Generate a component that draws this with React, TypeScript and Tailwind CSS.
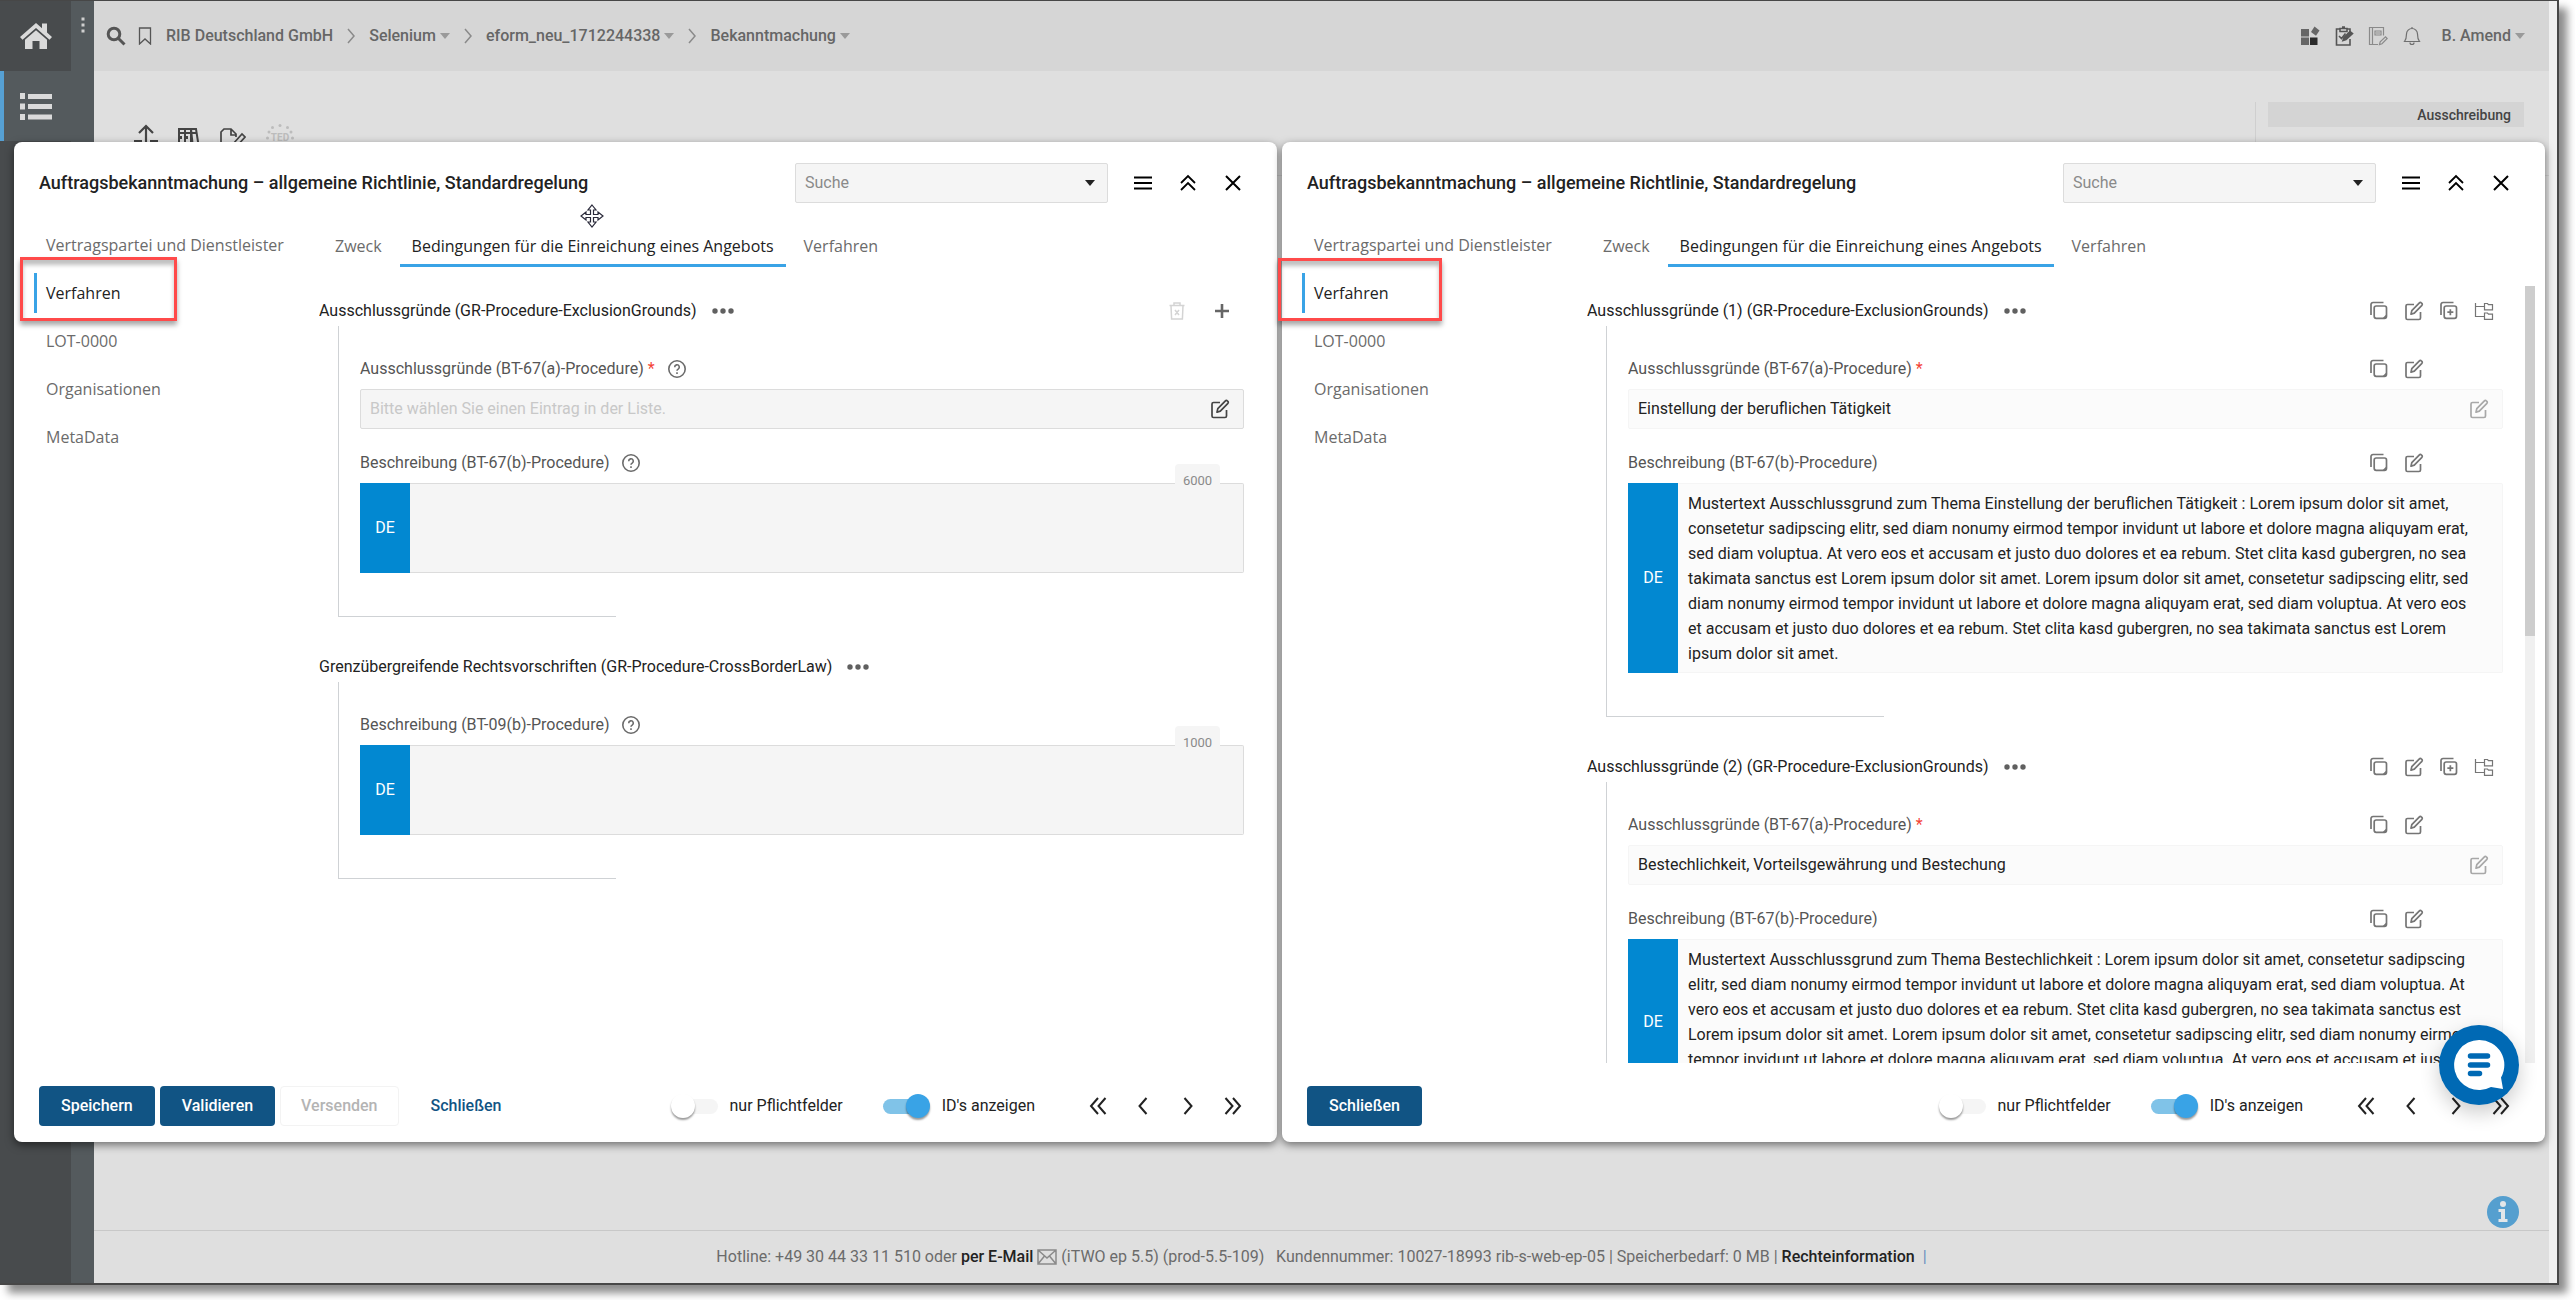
import { useId } from 'react';
import type { ReactNode } from 'react';
import clsx from 'clsx';

type IconProps = { className?: string };

const NAV_ITEMS = ['Vertragspartei und Dienstleister', 'Verfahren', 'LOT-0000', 'Organisationen', 'MetaData'];
const TABS = ['Zweck', 'Bedingungen für die Einreichung eines Angebots', 'Verfahren'];

const LOREM_1 =
  'Mustertext Ausschlussgrund zum Thema Einstellung der beruflichen Tätigkeit : Lorem ipsum dolor sit amet, consetetur sadipscing elitr, sed diam nonumy eirmod tempor invidunt ut labore et dolore magna aliquyam erat, sed diam voluptua. At vero eos et accusam et justo duo dolores et ea rebum. Stet clita kasd gubergren, no sea takimata sanctus est Lorem ipsum dolor sit amet. Lorem ipsum dolor sit amet, consetetur sadipscing elitr, sed diam nonumy eirmod tempor invidunt ut labore et dolore magna aliquyam erat, sed diam voluptua. At vero eos et accusam et justo duo dolores et ea rebum. Stet clita kasd gubergren, no sea takimata sanctus est Lorem ipsum dolor sit amet.';
const LOREM_2 =
  'Mustertext Ausschlussgrund zum Thema Bestechlichkeit : Lorem ipsum dolor sit amet, consetetur sadipscing elitr, sed diam nonumy eirmod tempor invidunt ut labore et dolore magna aliquyam erat, sed diam voluptua. At vero eos et accusam et justo duo dolores et ea rebum. Stet clita kasd gubergren, no sea takimata sanctus est Lorem ipsum dolor sit amet. Lorem ipsum dolor sit amet, consetetur sadipscing elitr, sed diam nonumy eirmod tempor invidunt ut labore et dolore magna aliquyam erat, sed diam voluptua. At vero eos et accusam et justo duo dolores et ea rebum.';

/* ---------- icons ---------- */

function EditIcon({ className }: IconProps) {
  return (
    <svg viewBox="0 0 20 20" className={clsx('size-5', className)} fill="none" stroke="currentColor" strokeWidth="1.7">
      <path d="M10 3.5H3.5a1.5 1.5 0 0 0-1.5 1.5v12a1.5 1.5 0 0 0 1.5 1.5h11.5a1.5 1.5 0 0 0 1.5-1.5v-6" />
      <path d="M7 13.2l.8-3.6 7.6-7.8a1.3 1.3 0 0 1 1.9 0l.6.6a1.3 1.3 0 0 1 0 1.9l-7.6 7.8z" strokeLinejoin="round" />
    </svg>
  );
}

function CopyIcon({ className }: IconProps) {
  return (
    <svg viewBox="0 0 20 20" className={clsx('size-5', className)} fill="none" stroke="currentColor" strokeWidth="1.7">
      <path d="M2 14V3.500a2 2 0 0 1 2-2h10.500" />
      <rect x="5.200" y="5" width="12.300" height="12.300" rx="2" />
      <path d="M13.500 17.300l4-4v2.500a1.500 1.500 0 0 1-1.500 1.500z" fill="currentColor" stroke="none" />
    </svg>
  );
}

function CopyPlusIcon({ className }: IconProps) {
  return (
    <svg viewBox="0 0 20 20" className={clsx('size-5', className)} fill="none" stroke="currentColor" strokeWidth="1.7">
      <path d="M2 14V3.500a2 2 0 0 1 2-2h10.500" />
      <rect x="5.200" y="5" width="12.300" height="12.300" rx="2" />
      <path d="M11.350 8.200v6M8.350 11.200h6" />
    </svg>
  );
}

function TreeIcon({ className }: IconProps) {
  return (
    <svg viewBox="0 0 20 20" className={clsx('size-5', className)} fill="none" stroke="currentColor" strokeWidth="1.200">
      <path d="M1.500 2v13.500h8.500M1.500 5.500H10" />
      <path d="M10.500 2.500h3l1 1.200h4v5.100h-8zM10.500 12h3l1 1.200h4v5.100h-8z" />
    </svg>
  );
}

function TrashIcon({ className }: IconProps) {
  return (
    <svg viewBox="0 0 20 20" className={clsx('size-5', className)} fill="none" stroke="currentColor" strokeWidth="1.500">
      <path d="M2.500 4.500h15M7 4V2h6v2M4 4.500l.6 13.500h10.800L16 4.500M8 9l4 5M12 9l-4 5" />
    </svg>
  );
}

function HelpIcon() {
  return (
    <svg viewBox="0 0 20 20" className="size-5 text-[#6b6b6b]" fill="none" stroke="currentColor" strokeWidth="1.600">
      <circle cx="10" cy="10" r="8.200" />
      <path d="M7.700 8.200a2.300 2.300 0 1 1 3.500 1.900c-.8.5-1.200.8-1.200 1.700M10 13.300v1.700" />
    </svg>
  );
}

function DotsIcon() {
  return (
    <svg viewBox="0 0 22 6" className="h-1.5 w-[22px] text-[#606060]" fill="currentColor">
      <circle cx="3" cy="3" r="2.700" />
      <circle cx="11" cy="3" r="2.700" />
      <circle cx="19" cy="3" r="2.700" />
    </svg>
  );
}

function Caret({ className }: IconProps) {
  return (
    <svg viewBox="0 0 10 6" className={className} fill="currentColor">
      <path d="M0 0h10L5 6z" />
    </svg>
  );
}

function LineIcon({ d, className, width = '2' }: { d: string; className?: string; width?: string }) {
  return (
    <svg viewBox="0 0 20 20" className={clsx('size-5', className)} fill="none" stroke="currentColor" strokeWidth={width}>
      <path d={d} />
    </svg>
  );
}

/* ---------- background page ---------- */

function SideRail() {
  return (
    <aside className="flex w-[94px] shrink-0 bg-[#545a5d]">
      <div className="flex w-[71px] flex-col bg-[#484b4d]">
        <button aria-label="Start" className="flex h-[70px] items-center justify-center text-[#dadada]">
          <svg viewBox="0 0 32 28" className="h-7 w-8" fill="currentColor">
            <path d="M16 1 0 15l2.500 2.700L16 6l13.500 11.700L32 15l-5-4.400V1.500h-5v4.700z" />
            <path d="M16 8.200 5 17.700V27h7.500v-8h7v8H27v-9.300z" />
          </svg>
        </button>
        <button
          aria-label="Navigation"
          className="flex h-[70px] items-center justify-center border-l-4 border-[#56a0d3] bg-[#545a5d] pr-1 text-[#dadada]"
        >
          <svg viewBox="0 0 32 27" className="h-[27px] w-8" fill="currentColor">
            <path d="M0 0h5v6H0zM8 1h24v5H8zM0 10.500h5v6H0zM8 11h24v5H8zM0 21h5v6H0zM8 21.500h24v5H8z" />
          </svg>
        </button>
      </div>
      <svg viewBox="0 0 4 16" className="mx-auto mt-4 h-4 w-1" fill="#cfcfcf">
        <path d="M.5.500h3v3h-3zM.5 6.500h3v3h-3zM.5 12.500h3v3h-3z" />
      </svg>
    </aside>
  );
}

function Crumb({ label, first }: { label: string; first?: boolean }) {
  return (
    <>
      {!first && (
        <svg viewBox="0 0 8 16" className="mx-3.5 h-4 w-2" fill="none" stroke="#8a8a8a" strokeWidth="1.500">
          <path d="M1 1l6 7-6 7" />
        </svg>
      )}
      <a href="#" className="flex items-center gap-1">
        {label}
        {!first && <Caret className="h-1.5 w-2.5 text-[#9a9a9a]" />}
      </a>
    </>
  );
}

function TopBar() {
  return (
    <header className="flex h-[70px] items-center bg-[#d6d6d6] pr-6 pl-3 text-base font-medium text-[#666]">
      <svg viewBox="0 0 20 20" className="size-5" fill="none" stroke="#555" strokeWidth="3">
        <circle cx="8" cy="8" r="5.800" />
        <path d="M12.500 12.500l6 6" />
      </svg>
      <svg viewBox="0 0 14 18" className="mr-3.5 ml-3 h-[18px] w-3.5" fill="none" stroke="#555" strokeWidth="1.300">
        <path d="M1.500 1h11v16L7 12l-5.500 5z" />
      </svg>
      <nav aria-label="Breadcrumb" className="flex items-center">
        <Crumb label="RIB Deutschland GmbH" first />
        <Crumb label="Selenium" />
        <Crumb label="eform_neu_1712244338" />
        <Crumb label="Bekanntmachung" />
      </nav>
      <div className="ml-auto flex items-center gap-3.5">
        <svg viewBox="0 0 20 20" className="size-5" fill="#666">
          <path d="M1 3h8v7.500H1zM1 11.500h8V19H1z" />
          <path d="M10 11.500h7.500V19H10z" fill="#2b2b2b" />
          <path d="M14.500.500l5 4-3.500 5.200-5-3.700z" />
        </svg>
        <svg viewBox="0 0 20 20" className="size-5" fill="none" stroke="#555" strokeWidth="1.600">
          <path d="M6 3H2.500v16H16v-6M13 3h3v3M6 2.500h7v3H6zM8 1h3M5 10l2.500 2.500 4-5" />
          <path d="M9 14.500l1-3 6-6 2.500 2-6.500 6z" fill="#555" />
        </svg>
        <svg viewBox="0 0 20 20" className="size-5" fill="none" stroke="#8a8a8a" strokeWidth="1.200">
          <path d="M10 18.500H1.500v-17h14v8M4.500 1.500v17M7 5h6v4H7zM8 7h4" />
          <path d="M11.500 18.500l.7-2.700 5.300-5 1.700 1.700-5.200 5.200z" />
        </svg>
        <svg viewBox="0 0 20 20" className="size-5" fill="none" stroke="#6f6f6f" strokeWidth="1.200">
          <path d="M2.500 15.500c2-2.500 2-4 2-7.500C4.500 5 7 2.500 10 2.500S15.500 5 15.500 8c0 3.500 0 5 2 7.500zM10 2.500V1M8 16.500a2 2 0 0 0 4 0" />
        </svg>
        <button className="ml-1.5 flex items-center gap-1 font-medium">
          B. Amend
          <Caret className="h-1.5 w-2.5 text-[#9a9a9a]" />
        </button>
      </div>
    </header>
  );
}

function Toolbar() {
  return (
    <div className="flex h-[105px] border-b border-[#cfcfcf] pl-10">
      <div className="flex items-start gap-5 pt-[53px] text-[#444]">
        <svg viewBox="0 0 24 22" className="h-[22px] w-6" fill="none" stroke="currentColor" strokeWidth="2.200">
          <path d="M12 20V2M5 9l7-7 7 7M0 17h8M16 17h8" />
        </svg>
        <svg viewBox="0 0 22 22" className="mt-1 h-[22px] w-[22px]" fill="none" stroke="currentColor" strokeWidth="2">
          <path d="M1 1h6v20H1zM7 1h6v20H7zM13 1h5l3 19h-6zM1 5h18M3 8v3M9 8v3" />
        </svg>
        <svg viewBox="0 0 26 22" className="mt-1 h-[22px] w-[26px]" fill="none" stroke="currentColor" strokeWidth="1.700">
          <path d="M1 20V4l3-3h7l5 5v3M11 1v6h5M13 16l9-10 3 3-9 10z" />
        </svg>
        <svg viewBox="0 0 28 28" className="size-7" fill="#bcbcbc">
          <circle cx="14" cy="1.500" r="1.500" />
          <circle cx="6.500" cy="3.500" r="1.500" />
          <circle cx="21.500" cy="3.500" r="1.500" />
          <circle cx="3" cy="8" r="1.500" />
          <circle cx="25" cy="8" r="1.500" />
          <circle cx="1.500" cy="14" r="1.500" />
          <circle cx="26.500" cy="14" r="1.500" />
          <text x="14" y="17" textAnchor="middle" fontSize="10" fontWeight="700">
            TED
          </text>
        </svg>
      </div>
      <div className="ml-auto mt-[31px] w-[294px] border-l border-[#cfcfcf] pr-[25px] pl-3">
        <div className="flex h-[25px] items-center justify-end bg-[#d4d4d4] pr-[13px] text-sm font-medium text-[#444]">
          Ausschreibung
        </div>
      </div>
    </div>
  );
}

function PageFooter() {
  return (
    <footer className="mt-auto flex h-[53px] items-center justify-center border-t border-[#c8c8c8] text-base whitespace-pre text-[#6b6b6b]">
      Hotline: +49 30 44 33 11 510 oder{' '}
      <a href="#" className="font-medium text-[#222]">
        per E-Mail
      </a>
      <svg viewBox="0 0 20 16" className="mx-1 h-4 w-5" fill="none" stroke="#8a8a8a" strokeWidth="1.500">
        <path d="M1 1h18v14H1zM1 1l9 8 9-8M1 15l6.500-8M19 15l-6.500-8" />
      </svg>
      (iTWO ep 5.5) (prod-5.5-109)   Kundennummer: 10027-18993 rib-s-web-ep-05 | Speicherbedarf: 0 MB |{' '}
      <a href="#" className="font-medium text-[#222]">
        Rechteinformation
      </a>
      <span className="ml-2 text-[#6a8fc0]">|</span>
    </footer>
  );
}

/* ---------- dialog parts ---------- */

function IconButton({ label, children }: { label: string; children: ReactNode }) {
  return (
    <button aria-label={label} className="flex h-10 w-[45px] items-center justify-center">
      {children}
    </button>
  );
}

function SmallButton({ label, children }: { label: string; children: ReactNode }) {
  return (
    <button aria-label={label} className="flex h-[30px] w-[35px] items-center justify-center text-[#757575]">
      {children}
    </button>
  );
}

function RowActions() {
  return (
    <div className="mr-[72px] ml-auto flex">
      <SmallButton label="Kopieren">
        <CopyIcon />
      </SmallButton>
      <SmallButton label="Bearbeiten">
        <EditIcon />
      </SmallButton>
    </div>
  );
}

function Toggle({ label, on }: { label: string; on?: boolean }) {
  return (
    <label className="flex items-center gap-3">
      <input
        type="checkbox"
        role="switch"
        defaultChecked={on}
        className="relative h-6 w-[47px] appearance-none before:absolute before:top-[5px] before:right-0 before:h-[15px] before:w-9 before:rounded-full before:bg-[#f5f5f5] after:absolute after:top-0 after:left-0 after:size-6 after:rounded-full after:bg-white after:shadow-[0_2px_2px_rgba(0,0,0,0.4)] checked:before:right-auto checked:before:left-0 checked:before:bg-[#80c3e8] checked:after:right-0 checked:after:left-auto checked:after:bg-[#39a3e6]"
      />
      {label}
    </label>
  );
}

function Group({ title, actions, children }: { title: string; actions?: ReactNode; children: ReactNode }) {
  return (
    <section>
      <div className="flex h-[30px] items-center">
        <h3 className="text-[#222]">{title}</h3>
        <button aria-label="Weitere Optionen" className="ml-[15px]">
          <DotsIcon />
        </button>
        <div className="ml-auto flex">{actions}</div>
      </div>
      <div className="ml-[19px] border-l border-[#cfd2d5]">
        <div className="pt-[23px] pb-[43px] pl-[21px]">{children}</div>
        <div className="h-px w-[277px] bg-[#cfd2d5]" />
      </div>
    </section>
  );
}

type FieldProps = { label: string; value?: string; required?: boolean; readOnly?: boolean };

function SelectField({ label, value, required, readOnly }: FieldProps) {
  const id = useId();
  return (
    <div>
      <div className="flex h-10 items-center">
        <label htmlFor={id} className="text-[#555]">
          {label} {required && <span className="text-[#f44336]">*</span>}
        </label>
        {readOnly ? (
          <RowActions />
        ) : (
          <button aria-label="Hilfe" className="ml-3">
            <HelpIcon />
          </button>
        )}
      </div>
      <div
        className={clsx(
          'flex h-10 items-center rounded-xs border pr-[13px] pl-[9px]',
          readOnly ? 'border-[#f5f5f5] bg-[#fbfbfb]' : 'border-[#dcdcdc] bg-[#f5f5f5]',
        )}
      >
        <input
          id={id}
          readOnly
          defaultValue={value}
          placeholder="Bitte wählen Sie einen Eintrag in der Liste."
          className="min-w-0 flex-1 bg-transparent text-[#222] outline-none placeholder:text-[#c8c8c8]"
        />
        <button aria-label="Auswählen" className={readOnly ? 'text-[#a8a8a8]' : 'text-[#444]'}>
          <EditIcon />
        </button>
      </div>
    </div>
  );
}

function TextField({ label, value, readOnly, limit, rows }: FieldProps & { limit?: string; rows?: number }) {
  const id = useId();
  return (
    <div>
      <div className="flex h-10 items-center">
        <label htmlFor={id} className="text-[#555]">
          {label}
        </label>
        {readOnly ? (
          <RowActions />
        ) : (
          <button aria-label="Hilfe" className="ml-3">
            <HelpIcon />
          </button>
        )}
      </div>
      <div className="relative flex">
        <div className="flex w-[50px] shrink-0 items-center justify-center bg-[#0288d1] text-white">DE</div>
        <textarea
          id={id}
          readOnly={readOnly}
          rows={rows}
          defaultValue={value}
          className={clsx(
            'block min-w-0 flex-1 resize-none overflow-hidden rounded-r-xs border border-l-0 pt-[7px] pr-[29px] pb-[6px] pl-2.5 leading-[25px] text-[#222] outline-none',
            readOnly ? 'border-[#f5f5f5] bg-[#fbfbfb]' : 'h-[90px] border-[#dcdcdc] bg-[#f5f5f5]',
          )}
        />
        {limit && (
          <span className="absolute -top-[19px] right-6 flex h-[21px] w-[45px] items-end justify-center rounded-t-sm bg-[#f5f5f5] text-[13px] leading-[8px] text-[#8a8a8a]">
            {limit}
          </span>
        )}
      </div>
    </div>
  );
}

type DialogProps = { highlight: string; buttons: ReactNode; scrollbar?: boolean; children: ReactNode };

function Dialog({ highlight, buttons, scrollbar, children }: DialogProps) {
  return (
    <section className="flex min-w-0 flex-1 flex-col rounded-lg bg-white shadow-[0_3px_8px_rgba(0,0,0,0.5)]">
      <div className="flex items-center pt-[21px] pr-[22px] pl-[25px]">
        <h2 className="text-lg font-medium text-[#222]">
          Auftragsbekanntmachung – allgemeine Richtlinie, Standardregelung
        </h2>
        <div className="mr-3 ml-auto flex h-10 w-[313px] items-center rounded-xs border border-[#dcdcdc] bg-[#f5f5f5] pr-3 pl-[9px]">
          <input
            aria-label="Suche"
            placeholder="Suche"
            className="min-w-0 flex-1 bg-transparent outline-none placeholder:text-[#8a8a8a]"
          />
          <button aria-label="Liste öffnen">
            <Caret className="h-1.5 w-2.5 text-[#222]" />
          </button>
        </div>
        <IconButton label="Menü">
          <LineIcon d="M1 4.500h18M1 10h18M1 15.500h18" width="2.200" />
        </IconButton>
        <IconButton label="Einklappen">
          <LineIcon d="M3 10l7-7 7 7M3 17l7-7 7 7" width="1.800" />
        </IconButton>
        <IconButton label="Fenster schließen">
          <LineIcon d="M3 3l14 14M17 3L3 17" />
        </IconButton>
      </div>

      <div className="flex min-h-0 flex-1">
        <nav className="w-[305px] shrink-0 pt-[18px] font-['Open_Sans',sans-serif] text-base text-[#6b6b6b]">
          {NAV_ITEMS.map((item) => {
            const active = item === 'Verfahren';
            return (
              <div key={item} className="relative flex h-12 items-center pl-5">
                <a
                  href="#"
                  className={clsx(
                    'flex h-10 items-center border-l-[3px] pl-[9px]',
                    active ? 'border-[#39a3e6] text-[#222]' : 'border-transparent',
                  )}
                >
                  {item}
                </a>
                {active && (
                  <span
                    className={clsx(
                      'pointer-events-none absolute border-3 border-[#ff4a4a] shadow-[0_4px_5px_rgba(0,0,0,0.35),inset_0_5px_4px_rgba(0,0,0,0.25)]',
                      highlight,
                    )}
                  />
                )}
              </div>
            );
          })}
        </nav>

        <div className="flex min-w-0 flex-1 flex-col">
          <div className="mt-6 flex gap-1.5 pl-1 font-['Open_Sans',sans-serif] text-base">
            {TABS.map((tab, i) => (
              <button
                key={tab}
                className={clsx(
                  'h-10 border-b-[3px] px-3',
                  i === 1 ? 'border-[#39a3e6] text-[#222]' : 'border-transparent text-[#6b6b6b]',
                )}
              >
                {tab}
              </button>
            ))}
          </div>
          <div className={clsx('mt-[19px] flex min-h-0 flex-1', scrollbar ? 'pr-2.5' : 'pr-[33px]')}>
            <div className="flex min-w-0 flex-1 flex-col gap-[35px] overflow-hidden pt-2.5">{children}</div>
            {scrollbar && (
              <div className="ml-[22px] w-2.5 shrink-0 bg-[#f0f0f0]">
                <div className="h-[45%] bg-[#cdcdcd]" />
              </div>
            )}
          </div>
        </div>
      </div>

      <div className="flex items-center pt-[23px] pr-[22px] pb-4 pl-[25px] text-[#222]">
        <div className="flex gap-[5px]">{buttons}</div>
        <div className="ml-auto flex gap-10">
          <Toggle label="nur Pflichtfelder" />
          <Toggle label="ID's anzeigen" on />
        </div>
        <div className="ml-10 flex">
          <IconButton label="Erste">
            <LineIcon d="M10 2l-7 8 7 8M17.500 2l-7 8 7 8" />
          </IconButton>
          <IconButton label="Zurück">
            <LineIcon d="M13.500 2l-7 8 7 8" />
          </IconButton>
          <IconButton label="Weiter">
            <LineIcon d="M6.500 2l7 8-7 8" />
          </IconButton>
          <IconButton label="Letzte">
            <LineIcon d="M2.500 2l7 8-7 8M10 2l7 8-7 8" />
          </IconButton>
        </div>
      </div>
    </section>
  );
}

const primary = 'h-10 rounded-[4px] bg-[#115484] px-[22px] font-medium text-white';

function EditDialog() {
  return (
    <Dialog
      highlight="-top-3 left-1.5 h-16 w-[157px]"
      buttons={
        <>
          <button className={primary}>Speichern</button>
          <button className={primary}>Validieren</button>
          <button disabled className="h-10 rounded-[4px] border border-[#f3f3f3] px-5 font-medium text-[#b4b4b4]">
            Versenden
          </button>
          <button className="ml-[7px] h-10 px-5 font-medium text-[#115484]">Schließen</button>
        </>
      }
    >
      <Group
        title="Ausschlussgründe (GR-Procedure-ExclusionGrounds)"
        actions={
          <>
            <IconButton label="Löschen">
              <TrashIcon className="text-[#d4d4d4]" />
            </IconButton>
            <IconButton label="Hinzufügen">
              <LineIcon d="M10 3v14M3 10h14" className="text-[#666]" width="2.600" />
            </IconButton>
          </>
        }
      >
        <SelectField label="Ausschlussgründe (BT-67(a)-Procedure)" required />
        <div className="mt-3.5">
          <TextField label="Beschreibung (BT-67(b)-Procedure)" limit="6000" />
        </div>
      </Group>
      <Group title="Grenzübergreifende Rechtsvorschriften (GR-Procedure-CrossBorderLaw)">
        <TextField label="Beschreibung (BT-09(b)-Procedure)" limit="1000" />
      </Group>
    </Dialog>
  );
}

function GroundsGroup({ nr, value, text, rows }: { nr: number; value: string; text: string; rows: number }) {
  return (
    <Group
      title={`Ausschlussgründe (${nr}) (GR-Procedure-ExclusionGrounds)`}
      actions={
        <div className="mr-0.5 flex">
          <SmallButton label="Kopieren">
            <CopyIcon />
          </SmallButton>
          <SmallButton label="Bearbeiten">
            <EditIcon />
          </SmallButton>
          <SmallButton label="Duplizieren">
            <CopyPlusIcon />
          </SmallButton>
          <SmallButton label="Struktur">
            <TreeIcon />
          </SmallButton>
        </div>
      }
    >
      <SelectField label="Ausschlussgründe (BT-67(a)-Procedure)" value={value} required readOnly />
      <div className="mt-3.5">
        <TextField label="Beschreibung (BT-67(b)-Procedure)" value={text} rows={rows} readOnly />
      </div>
    </Group>
  );
}

function TemplateDialog() {
  return (
    <Dialog
      scrollbar
      highlight="-top-[11px] -left-1 h-[63px] w-[164px]"
      buttons={<button className={primary}>Schließen</button>}
    >
      <GroundsGroup nr={1} value="Einstellung der beruflichen Tätigkeit" text={LOREM_1} rows={7} />
      <GroundsGroup nr={2} value="Bestechlichkeit, Vorteilsgewährung und Bestechung" text={LOREM_2} rows={6} />
    </Dialog>
  );
}

export default function App() {
  return (
    <div className="h-screen bg-white pr-4 pb-[15px] font-[Roboto,sans-serif] text-base">
      <div className="relative flex h-full border-t border-r-2 border-b-2 border-[#474747] bg-[#dfdfdf] shadow-[8px_8px_8px_rgba(0,0,0,0.45)]">
        <SideRail />
        <main className="flex min-w-0 flex-1 flex-col">
          <TopBar />
          <Toolbar />
          <PageFooter />
        </main>
        <div className="w-2 shrink-0 bg-[#f0f0f0]" />

        <div className="absolute top-[141px] right-3 bottom-[141px] left-[14px] flex gap-[5px]">
          <EditDialog />
          <TemplateDialog />
        </div>

        <svg
          viewBox="0 0 24 24"
          className="absolute top-[203px] left-[580px] size-6"
          fill="white"
          stroke="#2a2a3a"
          strokeWidth="1.200"
        >
          <path d="M12 1l4 5h-2.500v4.500H18V8l5 4-5 4v-2.500h-4.500V18H16l-4 5-4-5h2.500v-4.500H6V16l-5-4 5-4v2.500h4.500V6H8z" />
        </svg>

        <button
          aria-label="Chat öffnen"
          className="absolute right-[38px] bottom-[178px] flex size-20 items-center justify-center rounded-full bg-[#0069b4] shadow-[0_8px_20px_rgba(0,0,0,0.2)]"
        >
          <svg viewBox="0 0 52 52" className="size-[52px]">
            <path d="M26 1a25 25 0 1 0 12 47l12 2-2-11.500A25 25 0 0 0 26 1z" fill="#fff" />
            <path d="M17.500 17h17M17.500 26h17M17.500 34.500h9" stroke="#0069b4" strokeWidth="5.500" strokeLinecap="round" />
          </svg>
        </button>

        <button
          aria-label="Information"
          className="absolute right-[38px] bottom-[55px] flex size-8 items-center justify-center rounded-full bg-[#559fcf]"
        >
          <svg viewBox="0 0 12 24" className="h-6 w-3" fill="#e2e6e9">
            <circle cx="6" cy="4" r="3" />
            <path d="M1.500 9H8v10h2.500v3h-9v-3H4v-7H1.500z" />
          </svg>
        </button>
      </div>
    </div>
  );
}
